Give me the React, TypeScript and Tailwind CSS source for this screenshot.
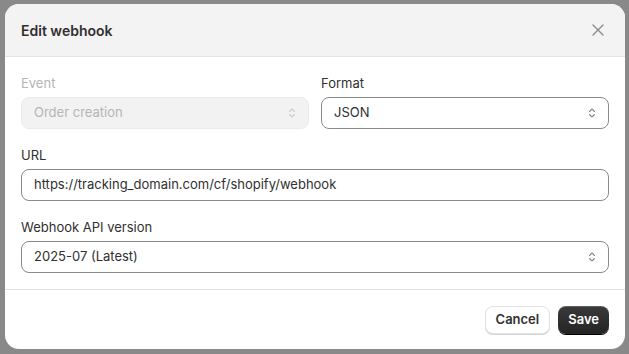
import React from 'react';

const font = { fontFamily: 'Inter, "Noto Sans", sans-serif' };

function Chevrons({ className }: { className?: string }) {
  return (
    <svg width="12" height="14" viewBox="0 0 12 14" fill="none" className={className}>
      <path d="M3.5 5.5 6 3l2.5 2.5M3.5 8.5 6 11l2.5-2.5" stroke="currentColor" strokeWidth="1.1" strokeLinecap="round" strokeLinejoin="round" />
    </svg>
  );
}

function SelectBox({ value, disabled }: { value: string; disabled?: boolean }) {
  return (
    <div
      className={`h-8 flex items-center justify-between pl-3 pr-[10px] rounded-lg border text-[13px] ${
        disabled ? 'bg-[#f2f2f2] border-[#ebebeb] text-[#b5b5b5]' : 'bg-white border-[#8a8a8a] text-[#303030]'
      }`}
    >
      <span>{value}</span>
      <Chevrons className={disabled ? 'text-[#cccccc]' : 'text-[#8a8a8a]'} />
    </div>
  );
}

function Field({ label, disabled, children }: { label: string; disabled?: boolean; children: React.ReactNode }) {
  return (
    <div className="flex flex-col gap-1 min-w-0">
      <label className={`text-[13px] leading-5 ${disabled ? 'text-[#b5b5b5]' : 'text-[#303030]'}`}>{label}</label>
      {children}
    </div>
  );
}

export default function App() {
  return (
    <div className="w-[629px] h-[354px] bg-[#898989] pt-[4px] pl-[5px] overflow-hidden" style={font}>
      <div className="w-[620px] h-[345px] bg-white rounded-[14px] overflow-hidden flex flex-col">
        <div className="h-[53px] shrink-0 bg-[#f3f3f3] border-b border-[#e3e3e3] flex items-center justify-between pl-4 pr-[17px]">
          <h2 className="text-[14px] font-semibold text-[#303030]">Edit webhook</h2>
          <button className="p-1 text-[#8a8a8a]">
            <svg width="12" height="12" viewBox="0 0 12 12" fill="none">
              <path d="M1 1l10 10M11 1 1 11" stroke="currentColor" strokeWidth="1.4" strokeLinecap="round" />
            </svg>
          </button>
        </div>

        <div className="flex flex-col gap-4 p-4 border-b border-[#e3e3e3]">
          <div className="grid grid-cols-2 gap-3">
            <Field label="Event" disabled>
              <SelectBox value="Order creation" disabled />
            </Field>
            <Field label="Format">
              <SelectBox value="JSON" />
            </Field>
          </div>
          <Field label="URL">
            <div className="h-8 flex items-center px-3 rounded-lg border border-[#8a8a8a] bg-white text-[13px] text-[#303030]">
              https://tracking_domain.com/cf/shopify/webhook
            </div>
          </Field>
          <Field label="Webhook API version">
            <SelectBox value="2025-07 (Latest)" />
          </Field>
        </div>

        <div className="flex-1 flex items-center justify-end gap-2 px-4">
          <button className="h-7 px-[10px] rounded-lg bg-white text-[13px] font-semibold text-[#303030] border border-[#e3e3e3] shadow-[0_1px_0_#d4d4d4]">
            Cancel
          </button>
          <button className="h-7 px-[10px] rounded-lg bg-gradient-to-b from-[#3a3a3a] to-[#242424] text-[13px] font-semibold text-white shadow-[0_1px_0_#000,inset_0_1px_0_rgba(255,255,255,0.2)]">
            Save
          </button>
        </div>
      </div>
    </div>
  );
}
